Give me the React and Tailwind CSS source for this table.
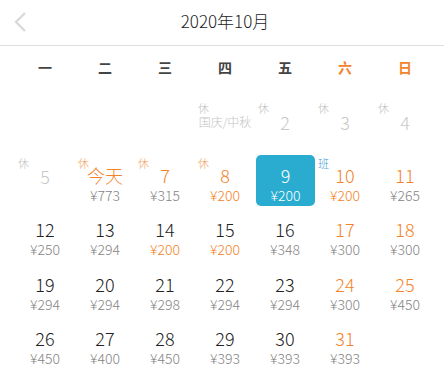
import React from 'react'

const ORANGE = 'text-[#f3832a]'

// kind: 'off' = past/greyed, 'sel' = selected
const rows = [
  [null, null, null,
    { label: '国庆/中秋', tag: '休', kind: 'off' },
    { n: 2, tag: '休', kind: 'off' },
    { n: 3, tag: '休', kind: 'off' },
    { n: 4, tag: '休', kind: 'off' }],
  [
    { n: 5, tag: '休', kind: 'off' },
    { label: '今天', tag: '休', orange: true, price: 773 },
    { n: 7, tag: '休', orange: true, price: 315 },
    { n: 8, tag: '休', orange: true, price: 200, cheap: true },
    { n: 9, price: 200, kind: 'sel' },
    { n: 10, tag: '班', orange: true, price: 200, cheap: true },
    { n: 11, orange: true, price: 265 }],
  [
    { n: 12, price: 250 },
    { n: 13, price: 294 },
    { n: 14, price: 200, cheap: true },
    { n: 15, price: 200, cheap: true },
    { n: 16, price: 348 },
    { n: 17, orange: true, price: 300 },
    { n: 18, orange: true, price: 300 }],
  [
    { n: 19, price: 294 },
    { n: 20, price: 294 },
    { n: 21, price: 298 },
    { n: 22, price: 294 },
    { n: 23, price: 294 },
    { n: 24, orange: true, price: 300 },
    { n: 25, orange: true, price: 450 }],
  [
    { n: 26, price: 450 },
    { n: 27, price: 400 },
    { n: 28, price: 450 },
    { n: 29, price: 393 },
    { n: 30, price: 393 },
    { n: 31, orange: true, price: 393 },
    null],
]

const weekdays = ['一', '二', '三', '四', '五', '六', '日']

function Tag({ d }) {
  if (!d.tag) return null
  let color = 'text-[#c2c2c2]'
  if (d.tag === '班') color = 'text-[#3b9bd6]'
  else if (d.orange) color = 'text-[#f5a25e]'
  return (
    <span className={`absolute top-[5px] left-[3px] text-[11px] leading-[11px] ${color}`}>
      {d.tag}
    </span>
  )
}

function Day({ d }) {
  if (!d) return <div />

  if (d.kind === 'sel') {
    return (
      <div className="relative pt-[2px] pb-[1px] pl-[1px]">
        <div className="h-full rounded-[5px] bg-[#29acd0] flex flex-col items-center pt-[9px] text-white font-light">
          <span className="text-[18px] leading-[22px]">{d.n}</span>
          <span className="text-[14px] leading-[18px]">¥{d.price}</span>
        </div>
      </div>
    )
  }

  const off = d.kind === 'off'
  let numColor = 'text-[#222]'
  if (off) numColor = 'text-[#c8c8c8]'
  else if (d.orange) numColor = ORANGE

  return (
    <div className={`relative flex flex-col items-center font-light ${d.price ? 'pt-[11px]' : 'pt-[12.5px]'}`}>
      <Tag d={d} />
      {d.label === '国庆/中秋' ? (
        <span className="text-[12px] leading-[22px] text-[#c4c4c4]">{d.label}</span>
      ) : (
        <span className={`text-[18px] leading-[22px] ${numColor}`}>{d.label || d.n}</span>
      )}
      {d.price && (
        <span className={`text-[14px] leading-[18px] ${d.cheap ? ORANGE : 'text-[#858585]'}`}>
          ¥{d.price}
        </span>
      )}
    </div>
  )
}

export default function App() {
  return (
    <div className="w-full h-screen overflow-hidden bg-white">
      <div className="w-[450px] font-['Noto_Sans_CJK_SC','Noto_Sans',sans-serif]">
        <div className="h-[46px] border-b border-[#dedede] grid grid-cols-[60px_1fr_60px] items-center">
          <div className="pl-[14px] pb-[1px] flex items-center">
            <svg width="14" height="22" viewBox="0 0 14 22" fill="none">
              <polyline points="11,2 2,11 11,20" stroke="#dadada" strokeWidth="2.4" strokeLinejoin="miter" />
            </svg>
          </div>
          <div className="text-center text-[17px] text-[#222] font-light pb-[4px]">2020年10月</div>
          <div />
        </div>

        <div className="grid grid-cols-7 px-[15px] h-[42px] items-center">
          {weekdays.map((w, i) => (
            <div
              key={w}
              className={`text-center text-[14px] font-bold ${i >= 5 ? ORANGE : 'text-[#444]'}`}
            >
              {w}
            </div>
          ))}
        </div>

        <div className="px-[15px] pt-[10px]">
          {rows.map((r, ri) => (
            <div key={ri} className="grid grid-cols-7 h-[54.5px]">
              {r.map((d, ci) => (
                <Day key={ci} d={d} />
              ))}
            </div>
          ))}
        </div>
      </div>
    </div>
  )
}
